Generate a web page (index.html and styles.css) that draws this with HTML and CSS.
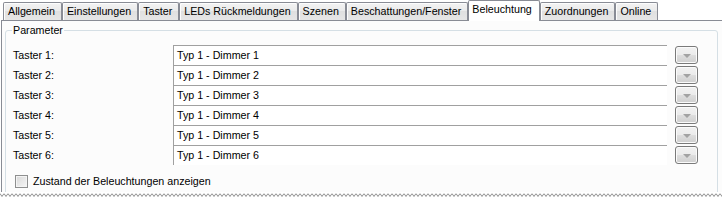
FILE: index.html
```html
<!DOCTYPE html>
<html>
<head>
<meta charset="utf-8">
<link rel="stylesheet" href="styles.css">
</head>
<body>
<div class="page">
  <div class="tabs">
    <div class="tab">Allgemein</div>
    <div class="tab">Einstellungen</div>
    <div class="tab">Taster</div>
    <div class="tab">LEDs Rückmeldungen</div>
    <div class="tab">Szenen</div>
    <div class="tab">Beschattungen/Fenster</div>
    <div class="tab active">Beleuchtung</div>
    <div class="tab">Zuordnungen</div>
    <div class="tab">Online</div>
  </div>
  <div class="panel">
    <fieldset class="group">
      <legend class="legend">Parameter</legend>
      <div class="row"><span class="label">Taster 1:</span><span class="field">Typ 1 - Dimmer 1</span><span class="btn"><span class="arrow"></span></span></div>
      <div class="row"><span class="label">Taster 2:</span><span class="field">Typ 1 - Dimmer 2</span><span class="btn"><span class="arrow"></span></span></div>
      <div class="row"><span class="label">Taster 3:</span><span class="field">Typ 1 - Dimmer 3</span><span class="btn"><span class="arrow"></span></span></div>
      <div class="row"><span class="label">Taster 4:</span><span class="field">Typ 1 - Dimmer 4</span><span class="btn"><span class="arrow"></span></span></div>
      <div class="row"><span class="label">Taster 5:</span><span class="field">Typ 1 - Dimmer 5</span><span class="btn"><span class="arrow"></span></span></div>
      <div class="row"><span class="label">Taster 6:</span><span class="field">Typ 1 - Dimmer 6</span><span class="btn"><span class="arrow"></span></span></div>
      <label class="check"><span class="box"></span><span>Zustand der Beleuchtungen anzeigen</span></label>
    </fieldset>
  </div>
  <svg class="tear" width="722" height="7" viewBox="0 0 722 7">
    <defs>
      <pattern id="zz" width="4" height="7" patternUnits="userSpaceOnUse">
        <polyline points="0,1.5 2,4.5 4,1.5" fill="none" stroke="#8f8f8f" stroke-width="1"/>
      </pattern>
    </defs>
    <rect x="0" y="0" width="722" height="7" fill="url(#zz)"/>
  </svg>
</div>
</body>
</html>
```
FILE: styles.css
```css
* { box-sizing: border-box; }
html, body { margin: 0; padding: 0; background: #ffffff; }
body {
  font-family: "Liberation Sans", Arial, sans-serif;
  font-size: 10.7px;
  color: #000;
  width: 722px;
  height: 200px;
  overflow: hidden;
}
.page {
  display: flex;
  flex-direction: column;
  height: 200px;
}
.tabs {
  display: flex;
  align-items: flex-end;
  height: 20px;
  padding-left: 3px;
  flex: none;
}
.tab {
  height: 18px;
  padding: 2px 6px 0 4px;
  line-height: 13px;
  border: 1px solid #898c95;
  border-bottom: none;
  border-radius: 2px 2px 0 0;
  background: linear-gradient(#f3f3f3, #ebebeb 45%, #e0e0e0 50%, #e6e6e6);
  box-shadow: inset 1px 1px 0 #fdfdfd;
  white-space: nowrap;
}
.tab.active {
  height: 21px;
  margin-bottom: -1px;
  padding: 2px 7px 0 3px;
  background: #ffffff;
  box-shadow: none;
  position: relative;
  z-index: 1;
}
.panel {
  flex: 1;
  margin-left: 1px;
  border-top: 1px solid #898c95;
  border-left: 1px solid #898c95;
  background: #fcfcfc;
  padding: 3px 4px 0 3px;
  overflow: hidden;
}
.group {
  margin: 0;
  border: 1px solid #d5dfe5;
  border-radius: 3px;
  padding: 8px 0 30px 7px;
  min-inline-size: 0;
}
.legend {
  padding: 0 1px;
  margin-left: -1px;
  line-height: 13px;
}
.row {
  display: flex;
  align-items: flex-start;
  height: 20px;
}
.label {
  width: 160px;
  line-height: 20px;
}
.field {
  width: 494px;
  height: 20px;
  border-top: 1px solid #a0a0a0;
  border-left: 1px solid #a0a0a0;
  background: #fff;
  padding-left: 3px;
  line-height: 18px;
}
.btn {
  width: 23px;
  height: 18px;
  margin-left: 8px;
  margin-top: 1px;
  border: 1px solid #7a7a7a;
  border-radius: 3px;
  background: linear-gradient(#f2f2f2, #ebebeb 48%, #dddddd 52%, #cfcfcf);
  box-shadow: inset 0 0 0 1px #fbfbfb;
  display: flex;
  align-items: center;
  justify-content: center;
}
.arrow {
  width: 0;
  height: 0;
  border-left: 4px solid transparent;
  border-right: 4px solid transparent;
  border-top: 4px solid #a2a2a2;
  margin-top: 1px;
}
.check {
  display: flex;
  align-items: center;
  gap: 5px;
  margin-top: 10px;
  padding-left: 2px;
  line-height: 13px;
}
.box {
  width: 13px;
  height: 13px;
  border: 1px solid #8e8f8f;
  background: linear-gradient(135deg, #d8d8d8, #f6f6f6);
  box-shadow: inset 0 0 0 1px #f4f4f4;
}
.tear {
  display: block;
  flex: none;
  margin-bottom: 1px;
}
```
